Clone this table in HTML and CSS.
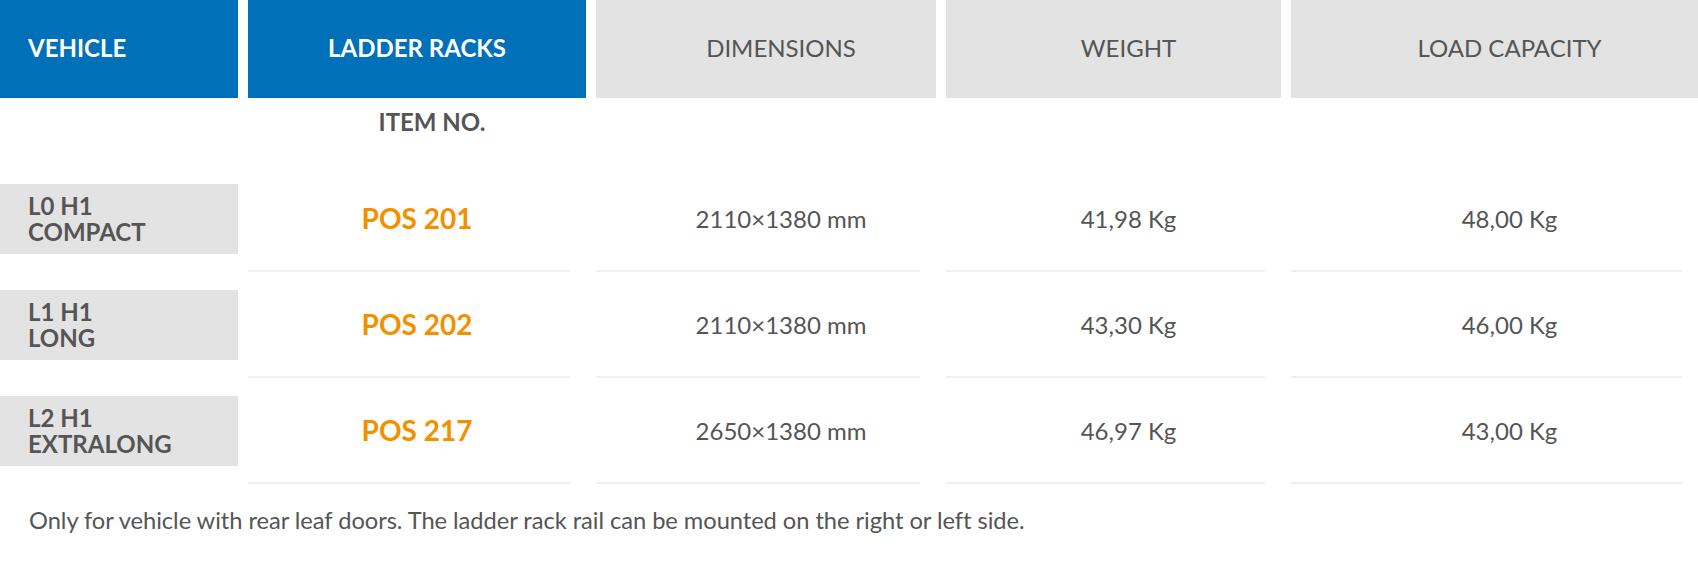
FILE: index.html
```html
<!DOCTYPE html>
<html lang="en">
<head>
<meta charset="utf-8">
<title>Ladder racks</title>
<link rel="stylesheet" href="styles.css">
</head>
<body>
<div class="table">
  <div class="row head">
    <div class="th blue left">VEHICLE</div>
    <div class="th blue">LADDER RACKS</div>
    <div class="th grey">DIMENSIONS</div>
    <div class="th grey">WEIGHT</div>
    <div class="th grey">LOAD CAPACITY</div>
  </div>
  <div class="row sub">
    <div></div>
    <div class="item">ITEM NO.</div>
    <div></div><div></div><div></div>
  </div>
  <div class="row data">
    <div class="veh">L0 H1<br>COMPACT</div>
    <div class="td pos">POS 201</div>
    <div class="td">2110×1380 mm</div>
    <div class="td">41,98 Kg</div>
    <div class="td">48,00 Kg</div>
  </div>
  <div class="row data">
    <div class="veh">L1 H1<br>LONG</div>
    <div class="td pos">POS 202</div>
    <div class="td">2110×1380 mm</div>
    <div class="td">43,30 Kg</div>
    <div class="td">46,00 Kg</div>
  </div>
  <div class="row data">
    <div class="veh">L2 H1<br>EXTRALONG</div>
    <div class="td pos">POS 217</div>
    <div class="td">2650×1380 mm</div>
    <div class="td">46,97 Kg</div>
    <div class="td">43,00 Kg</div>
  </div>
  <p class="note">Only for vehicle with rear leaf doors. The ladder rack rail can be mounted on the right or left side.</p>
</div>
</body>
</html>
```
FILE: styles.css
```css
html, body {
  margin: 0;
  padding: 0;
  background: #fff;
}
body {
  font-family: Lato, "Open Sans", sans-serif;
  color: #555;
  width: 1698px;
}
.row {
  display: grid;
  grid-template-columns: 238px 338px 340px 335px 407px;
  column-gap: 10px;
}
.head {
  height: 98px;
}
.th {
  display: flex;
  align-items: center;
  justify-content: center;
  font-size: 24px;
  padding-left: 30px;
  padding-bottom: 4px;
  box-sizing: border-box;
}
.th.blue {
  background: #0070b9;
  color: #fff;
  font-weight: 700;
  padding-left: 0;
}
.th.left {
  justify-content: flex-start;
  padding-left: 28px;
}
.th.grey {
  background: #e3e3e3;
  color: #555;
  font-weight: 400;
}
.sub {
  height: 68px;
}
.item {
  display: flex;
  align-items: center;
  justify-content: center;
  padding-left: 30px;
  padding-bottom: 22px;
  font-size: 24px;
  font-weight: 700;
  color: #555;
}
.veh {
  background: #e3e3e3;
  height: 70px;
  margin: 18px 0;
  padding-left: 28px;
  box-sizing: border-box;
  display: flex;
  flex-direction: column;
  justify-content: center;
  font-size: 24px;
  line-height: 26px;
  font-weight: 700;
  color: #555;
}
.td {
  display: flex;
  align-items: center;
  justify-content: center;
  margin-right: 16px;
  padding-left: 46px;
  border-bottom: 2px solid #efefef;
  font-size: 24px;
  color: #555;
}
.td.pos {
  padding-left: 16px;
  font-size: 28px;
  font-weight: 700;
  color: #f29100;
}
.note {
  margin: 22px 0 0;
  padding-left: 29px;
  font-size: 23.7px;
  letter-spacing: -0.05px;
  line-height: 1.2;
  color: #555;
}
```
